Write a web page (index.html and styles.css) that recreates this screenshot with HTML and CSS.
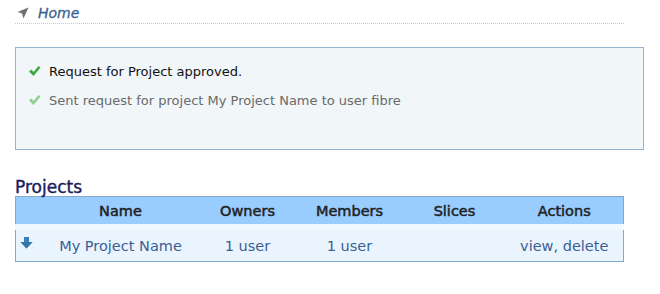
FILE: index.html
```html
<!DOCTYPE html>
<html>
<head>
<meta charset="utf-8">
<link rel="stylesheet" href="styles.css">
</head>
<body>
<div class="page">
  <div class="crumbs">
    <svg class="crumb-icon" width="12" height="12" viewBox="0 0 12 12"><path d="M11.5 0.5 L0.5 5 L5 6.5 L6.5 11.5 Z" fill="#707070"/></svg>
    <a class="crumb-link" href="#">Home</a>
  </div>
  <div class="messages">
    <div class="msg msg-main">
      <svg class="check" width="13" height="12" viewBox="0 0 13 12"><path d="M1 6.5 L3.5 4.5 L5.5 7 L10.5 1 L12.5 2.5 L5.5 11 Z" fill="#3fa83f"/></svg>
      <span>Request for Project approved.</span>
    </div>
    <div class="msg msg-faded">
      <svg class="check" width="13" height="12" viewBox="0 0 13 12"><path d="M1 6.5 L3.5 4.5 L5.5 7 L10.5 1 L12.5 2.5 L5.5 11 Z" fill="#8fcf8f"/></svg>
      <span>Sent request for project My Project Name to user fibre</span>
    </div>
  </div>
  <h2 class="section-title">Projects</h2>
  <table class="projects">
    <colgroup>
      <col class="w-icon"><col class="w-name"><col class="w-owners"><col class="w-members"><col class="w-slices"><col class="w-actions">
    </colgroup>
    <thead>
      <tr>
        <th class="c-icon"></th>
        <th>Name</th>
        <th>Owners</th>
        <th>Members</th>
        <th>Slices</th>
        <th class="c-actions">Actions</th>
      </tr>
    </thead>
    <tbody>
      <tr>
        <td class="c-icon"><svg width="13" height="12" viewBox="0 0 13 12"><path d="M4 0 H9 V5 H12.5 L6.5 11.5 L0.5 5 H4 Z" fill="#3d7fb8"/><path d="M0.5 5 H12.5 L6.5 11.5 Z" fill="#2f78a8"/></svg></td>
        <td><a href="#">My Project Name</a></td>
        <td><a href="#">1 user</a></td>
        <td><a href="#">1 user</a></td>
        <td></td>
        <td class="c-actions"><a href="#">view</a>, <a href="#">delete</a></td>
      </tr>
    </tbody>
  </table>
</div>
</body>
</html>
```
FILE: styles.css
```css
html, body {
  margin: 0;
  padding: 0;
  background: #ffffff;
}
body {
  font-family: "DejaVu Sans", Verdana, sans-serif;
  font-size: 13px;
  color: #000;
}
.page {
  padding: 3px 16px 0 15px;
  width: 629px;
}
.crumbs {
  display: flex;
  align-items: center;
  gap: 9px;
  height: 21px;
  width: 609px;
  padding-left: 2px;
  box-sizing: border-box;
  border-bottom: 1px dotted #c8c8c8;
}
.crumb-icon {
  display: block;
}
.crumb-link {
  color: #3b5f94;
  font-style: italic;
  font-size: 14px;
  -webkit-text-stroke: 0.3px #3b5f94;
  text-decoration: none;
}
.messages {
  margin-top: 23px;
  border: 1px solid #94b3d0;
  background: #f1f6f9;
  height: 103px;
  padding: 15px 0 0 12px;
  box-sizing: border-box;
}
.msg {
  display: flex;
  align-items: center;
  gap: 8px;
  height: 16px;
  margin-bottom: 13px;
}
.check {
  display: block;
}
.msg-main {
  color: #111;
}
.msg-faded {
  color: #6a6a6a;
}
.section-title {
  margin: 28px 0 0 0;
  font-size: 17px;
  font-weight: normal;
  color: #1c1c60;
  line-height: 18px;
  -webkit-text-stroke: 0.4px #1c1c60;
}
.projects {
  width: 608px;
  border-collapse: collapse;
  border: 1px solid #86a8c8;
  table-layout: fixed;
  margin-top: 0;
}
.w-icon { width: 30px; }
.w-name { width: 150px; }
.w-owners { width: 104px; }
.w-members { width: 100px; }
.w-slices { width: 110px; }
.w-actions { width: 114px; }
.projects th {
  background: #99ccff;
  height: 27px;
  padding: 0;
  font-weight: normal;
  font-size: 14.5px;
  color: #222;
  -webkit-text-stroke: 0.5px #222;
  text-align: center;
}
.projects td {
  background: #eaf4fe;
  height: 31px;
  padding: 0;
  font-size: 14.5px;
  text-align: center;
  border-top: 6px solid #f1f8ff;
  color: #3b5f94;
}
.projects a {
  color: #3b5f94;
  text-decoration: none;
}
.projects td.c-icon { text-align: left; padding-left: 4px; }
.projects td.c-icon svg { display: block; margin-top: -6px; }
.projects .c-actions { padding-right: 4px; }
```
